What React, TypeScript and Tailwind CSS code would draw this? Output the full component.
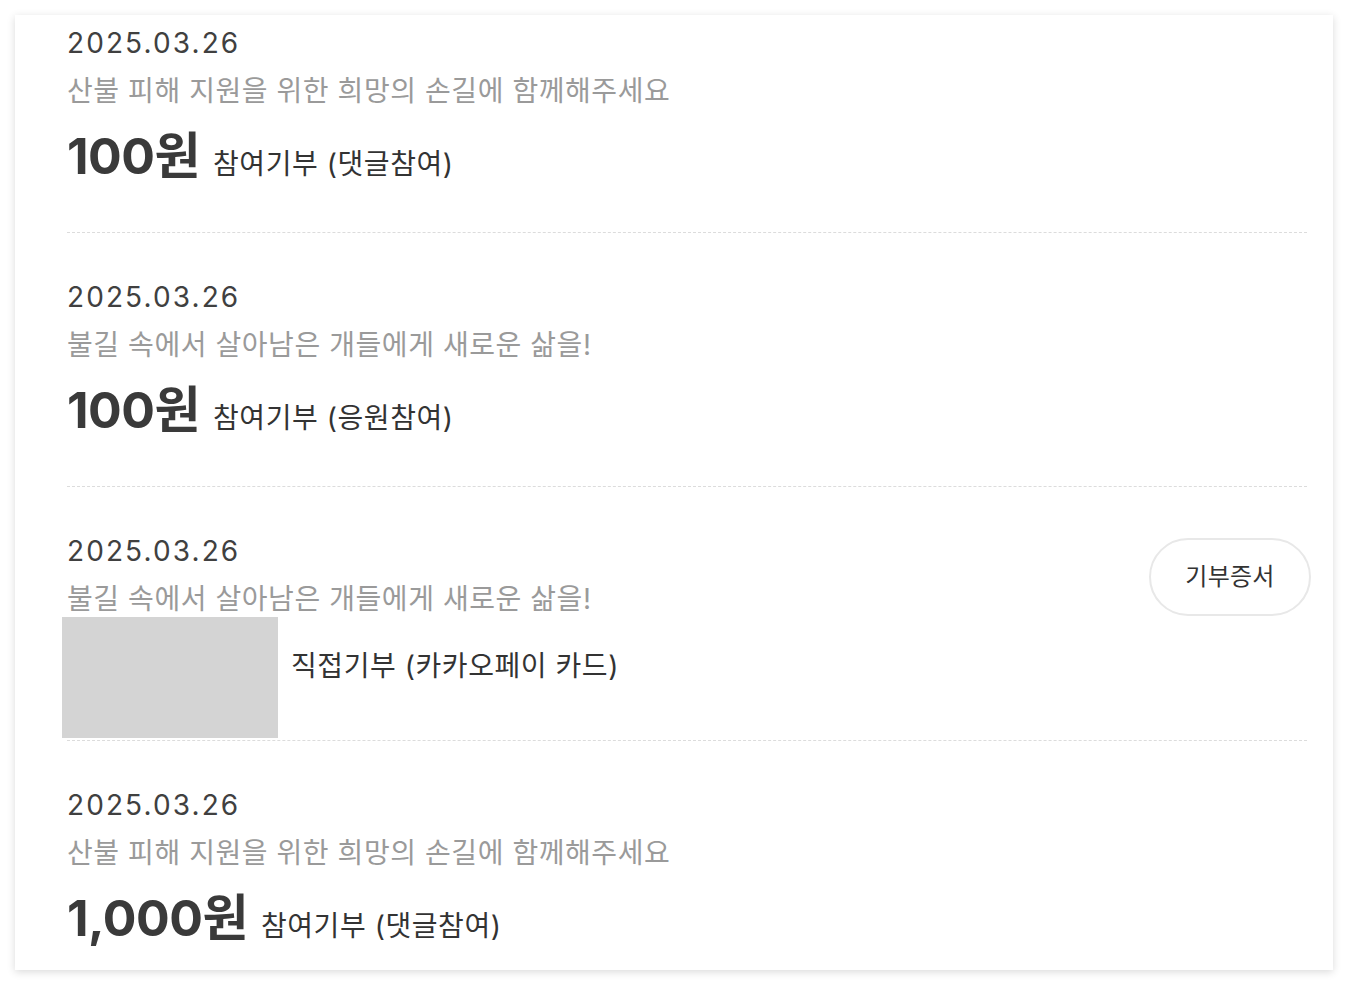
const font = { fontFamily: 'Inter, "Noto Sans CJK KR", sans-serif' };

type Item = {
  date: string;
  title: string;
  amount?: string;
  label: string;
  cert?: boolean;
};

const items: Item[] = [
  { date: "2025.03.26", title: "산불 피해 지원을 위한 희망의 손길에 함께해주세요", amount: "100원", label: "참여기부 (댓글참여)" },
  { date: "2025.03.26", title: "불길 속에서 살아남은 개들에게 새로운 삶을!", amount: "100원", label: "참여기부 (응원참여)" },
  { date: "2025.03.26", title: "불길 속에서 살아남은 개들에게 새로운 삶을!", label: "직접기부 (카카오페이 카드)", cert: true },
  { date: "2025.03.26", title: "산불 피해 지원을 위한 희망의 손길에 함께해주세요", amount: "1,000원", label: "참여기부 (댓글참여)" },
];

function Row({ item, first }: { item: Item; first: boolean }) {
  return (
    <li
      className={
        "flex justify-between shrink-0 border-b border-dashed border-[#dcdcdc] " +
        (first ? "h-[218px] pt-[8px]" : "h-[254px] pt-[44px]")
      }
    >
      <div className="flex flex-col">
        <p className="text-[28px] leading-[40px] tracking-[0.075em] text-[#404040]">{item.date}</p>
        <p className="mt-[8px] text-[28px] leading-[40px] tracking-[0.02em] text-[#9a9a9a]">{item.title}</p>
        {item.amount ? (
          <div className="mt-[13px] flex items-baseline gap-[13px] h-[64px]">
            <span className="text-[50px] leading-[64px] font-bold tracking-[-0.01em] text-[#3a3a3a]">{item.amount}</span>
            <span className="text-[28px] tracking-[0.02em] text-[#333]">{item.label}</span>
          </div>
        ) : (
          <div className="mt-[-2px] -ml-[5px] flex items-start">
            <div className="w-[216px] h-[121px] bg-[#d4d4d4]" />
            <span className="ml-[13px] mt-[29px] text-[28px] leading-[40px] tracking-[0.02em] text-[#333]">
              {item.label}
            </span>
          </div>
        )}
      </div>
      {item.cert && (
        <button className="mt-[7px] -mr-[4px] w-[162px] h-[78px] rounded-full border-2 border-[#e8e8e8] bg-white text-[24px] tracking-[0.01em] text-[#333]">
          기부증서
        </button>
      )}
    </li>
  );
}

export default function App() {
  return (
    <div className="min-h-[986px] bg-white p-[15px]" style={font}>
      <div className="w-[1318px] h-[955px] overflow-hidden bg-white shadow-[0_2px_8px_rgba(0,0,0,0.15)] pl-[52px] pr-[26px]">
        <ul className="flex flex-col">
          {items.map((it, i) => (
            <Row key={i} item={it} first={i === 0} />
          ))}
        </ul>
      </div>
    </div>
  );
}
